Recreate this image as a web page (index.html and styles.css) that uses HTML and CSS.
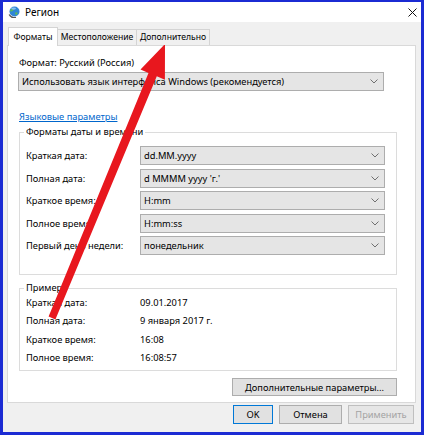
FILE: index.html
```html
<!DOCTYPE html>
<html lang="ru">
<head>
  <meta charset="UTF-8">
  <title>Регион</title>
  <link rel="stylesheet" href="styles.css">
</head>
<body>
  <div class="window">
    <!-- Title bar -->
    <div class="titlebar">
      <svg class="app-icon" width="12" height="12" viewBox="0 0 12 12">
        <circle cx="6.5" cy="5.5" r="5" fill="#2f86d6"/>
        <path d="M3 3.2 C4.5 2.4 5.8 3.4 5.2 4.6 C4.6 5.6 3.4 5.2 2.4 5.8 C1.9 4.8 2.2 3.8 3 3.2 Z" fill="#5cb85c"/>
        <path d="M7.5 6.5 C8.6 6 9.8 6.6 9.6 7.8 C9.2 8.8 8 9.2 7.4 8.4 C7 7.8 7 7 7.5 6.5 Z" fill="#5cb85c"/>
        <ellipse cx="5.6" cy="2.6" rx="2.4" ry="1.1" fill="#9fd0f5" opacity="0.8"/>
        <path d="M1.2 8.5 A5.6 5.6 0 0 0 8 11.4" stroke="#555" stroke-width="1.4" fill="none"/>
      </svg>
      <span class="title">Регион</span>
      <svg class="close" width="9" height="9" viewBox="0 0 9 9">
        <path d="M0.5 0.5 L8.5 8.5 M8.5 0.5 L0.5 8.5" stroke="#111" stroke-width="1"/>
      </svg>
    </div>

    <div class="client">
      <div class="tabs">
        <div class="tab active">Форматы</div>
        <div class="tab tab-location">Местоположение</div>
        <div class="tab tab-extra">Дополнительно</div>
      </div>

      <div class="panel">
        <div class="format-label">Формат: Русский (Россия)</div>
        <div class="combo wide">
          <span>Использовать язык интерфейса Windows (рекомендуется)</span>
          <svg class="chevron" width="8" height="5" viewBox="0 0 8 5"><polyline points="0.5,0.5 4,4 7.5,0.5" fill="none" stroke="#707070"/></svg>
        </div>
        <a class="link" href="#">Языковые параметры</a>

        <!-- Date and time formats -->
        <fieldset class="group formats">
          <legend>Форматы даты и времени</legend>
          <div class="rows" id="format-rows"></div>
        </fieldset>

        <!-- Sample -->
        <fieldset class="group sample">
          <legend>Пример</legend>
          <div class="sample-rows">
            <span>Краткая дата:</span><span>09.01.2017</span>
            <span>Полная дата:</span><span>9 января 2017 г.</span>
            <span>Краткое время:</span><span>16:08</span>
            <span>Полное время:</span><span>16:08:57</span>
          </div>
        </fieldset>

        <div class="more">
          <button class="btn more-btn">Дополнительные параметры...</button>
        </div>
      </div>

      <div class="buttons">
        <button class="btn ok">OK</button>
        <button class="btn cancel">Отмена</button>
        <button class="btn apply" disabled>Применить</button>
      </div>
    </div>

    <!-- Red arrow drawn over the dialog -->
    <svg class="arrow" width="424" height="435" viewBox="0 0 424 435">
      <polygon fill="#e8171e" points="48.6,316.6 148.5,72.9 140.5,69.5 165,44 164.9,79.7 156.8,76.3 55.4,319.4"/>
    </svg>
  </div>

  <script>
    const formats = [
      ['Краткая дата:', 'dd.MM.yyyy'],
      ['Полная дата:', "d MMMM yyyy 'г.'"],
      ['Краткое время:', 'H:mm'],
      ['Полное время:', 'H:mm:ss'],
      ['Первый день недели:', 'понедельник']
    ];

    const rows = document.getElementById('format-rows');
    formats.forEach(([label, value]) => {
      const name = document.createElement('span');
      name.textContent = label;
      const combo = document.createElement('div');
      combo.className = 'combo';
      combo.innerHTML = `<span></span><svg class="chevron" width="8" height="5" viewBox="0 0 8 5"><polyline points="0.5,0.5 4,4 7.5,0.5" fill="none" stroke="#707070"/></svg>`;
      combo.querySelector('span').textContent = value;
      rows.appendChild(name);
      rows.appendChild(combo);
    });
  </script>
</body>
</html>
```

FILE: styles.css
```css
/* General */
body {
  margin: 0;
  font-family: "Noto Sans", sans-serif;
  font-size: 9.3px;
  color: #000;
}

.window {
  position: relative;
  width: 424px;
  height: 435px;
  box-sizing: border-box;
  border: 3px solid #1b2bd3;
  border-top-width: 2px;
  background: #f0f0f0;
  display: flex;
  flex-direction: column;
}

/* Title bar */
.titlebar {
  height: 20px;
  background: #fff;
  display: flex;
  align-items: center;
  padding: 0 4px 0 5px;
}

.app-icon {
  margin-right: 5px;
}

.title {
  font-size: 10px;
}

.close {
  margin-left: auto;
}

/* Client area */
.client {
  flex: 1;
  padding: 0 5px 0 4px;
}

.tabs {
  position: relative;
  z-index: 1;
  display: flex;
  align-items: flex-end;
  padding: 5px 0 0 1px;
  margin-bottom: -1px;
}

.tab {
  box-sizing: border-box;
  flex-shrink: 0;
  height: 16px;
  margin: 0 0 1px -1px;
  border: 1px solid #d4d4d4;
  border-bottom: none;
  background: #f0f0f0;
  font-size: 8.6px;
  line-height: 14px;
  text-align: center;
  white-space: nowrap;
}

.tab.active {
  width: 50px;
  height: 19px;
  margin: 0;
  background: #fff;
  padding-top: 2px;
}

.tab-location {
  width: 80px;
}

.tab-extra {
  width: 74px;
}

.panel {
  box-sizing: border-box;
  height: 358px;
  border: 1px solid #d9d9d9;
  background: #fff;
}

.format-label {
  margin: 10px 0 0 11px;
  line-height: 14px;
}

/* Combo boxes */
.combo {
  box-sizing: border-box;
  height: 19px;
  border: 1px solid #adadad;
  background: #e5e5e5;
  display: flex;
  align-items: center;
  justify-content: space-between;
  padding: 0 5px 0 3px;
  white-space: nowrap;
  overflow: hidden;
}

.combo.wide {
  width: 366px;
  margin: 2px 0 0 10px;
}

.chevron {
  flex-shrink: 0;
}

.link {
  display: inline-block;
  margin: 19px 0 0 11px;
  line-height: 14px;
  color: #0066cc;
  text-decoration: underline;
}

/* Group boxes */
.group {
  box-sizing: border-box;
  width: 378px;
  margin: 1px 0 0 11px;
  border: 1px solid #dcdcdc;
  padding: 7px 11px 19px 6px;
  min-inline-size: 0;
}

.group legend {
  padding: 0 2px;
  margin-left: -2px;
  line-height: 14px;
}

.rows {
  display: grid;
  grid-template-columns: 114px 245px;
  grid-auto-rows: 19px;
  row-gap: 3.5px;
  align-items: center;
}

.group.sample {
  margin-top: 6px;
  padding: 0 11px 3px 6px;
}

.sample-rows {
  display: grid;
  grid-template-columns: 114px auto;
  grid-auto-rows: 18.5px;
  align-items: center;
  margin-top: -2px;
}

/* Buttons */
.btn {
  box-sizing: border-box;
  font-family: "Noto Sans", sans-serif;
  font-size: 9.3px;
  color: #000;
  background: #e1e1e1;
  border: 1px solid #adadad;
  padding: 0;
  height: 19px;
}

.more {
  width: 378px;
  margin: 7px 0 0 11px;
  display: flex;
  justify-content: flex-end;
}

.more-btn {
  width: 165px;
  height: 18px;
}

.buttons {
  display: flex;
  justify-content: flex-end;
  gap: 6px;
  margin-top: 2px;
  padding-right: 2px;
}

.ok {
  width: 40px;
  border-color: #0078d7;
}

.cancel {
  width: 63px;
}

.apply {
  width: 66px;
  color: #a3a3a3;
  background: #e6e6e6;
  border-color: #bfbfbf;
}

.arrow {
  position: absolute;
  left: -3px;
  top: -2px;
  pointer-events: none;
}
```
